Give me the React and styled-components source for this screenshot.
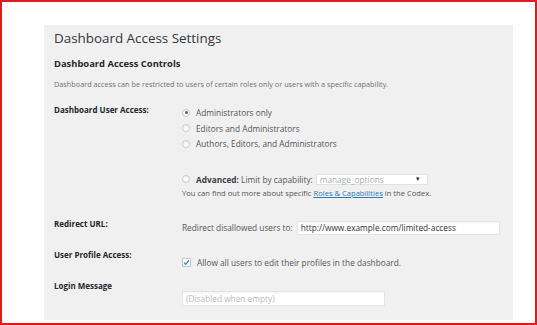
import React from 'react';
import styled, { createGlobalStyle } from 'styled-components';

const GlobalStyle = createGlobalStyle`
  body {
    margin: 0;
    font-family: "Open Sans", "Liberation Sans", sans-serif;
    background: #fff;
  }
`;

const Frame = styled.div`
  width: 537px;
  height: 325px;
  box-sizing: border-box;
  border: 2px solid #e11b1b;
  padding: 23px 0 0 42px;
  background: #fff;
`;

const Panel = styled.div`
  width: 469px;
  height: 295px;
  box-sizing: border-box;
  padding: 5px 10px 0;
  background: #f0f0f0;
  color: #555;
`;

const Title = styled.h1`
  margin: 0;
  font-size: 13.4px;
  line-height: 16px;
  font-weight: 400;
  color: #32373c;
`;

const SubTitle = styled.h2`
  margin: 12px 0 0;
  font-size: 9.4px;
  line-height: 12px;
  font-weight: 700;
  color: #23282d;
`;

const Description = styled.p`
  margin: 9px 0 0;
  font-size: 7.3px;
  line-height: 10px;
  color: #707070;
`;

const Row = styled.div`
  display: grid;
  grid-template-columns: 128px 1fr;
  margin-top: ${(p) => p.$gap}px;
`;

const Label = styled.div`
  font-size: 8px;
  line-height: 10px;
  font-weight: 700;
  color: #23282d;
`;

const Field = styled.div`
  padding-top: ${(p) => p.$offset || 0}px;
  font-size: 8.3px;
  color: #555;
`;

const Option = styled.label`
  display: flex;
  align-items: center;
  gap: 6px;
  height: ${(p) => p.$h || 15.5}px;
  margin-top: ${(p) => p.$gap || 0}px;
  white-space: nowrap;
`;

const Radio = styled.span`
  width: 8px;
  height: 8px;
  box-sizing: border-box;
  border: 1px solid #c4c8cc;
  border-radius: 50%;
  background: #fff;
  box-shadow: inset 0 1px 2px rgba(0, 0, 0, 0.08);
  display: flex;
  align-items: center;
  justify-content: center;
  flex: none;

  &::after {
    content: '';
    width: 3px;
    height: 3px;
    border-radius: 50%;
    background: ${(p) => (p.$checked ? '#4f6a80' : 'transparent')};
  }
`;

const Bold = styled.b`
  font-weight: 700;
  color: #3c4147;
`;

const Select = styled.span`
  display: inline-flex;
  align-items: center;
  justify-content: space-between;
  width: 112px;
  height: 11px;
  box-sizing: border-box;
  margin-left: -3px;
  padding: 0 6px 0 3px;
  background: #fff;
  border: 1px solid #e2e2e2;
  color: #aaa;
`;

const Arrow = styled.span`
  color: #333;
  font-size: 6px;
`;

const Help = styled.div`
  font-size: 7.6px;
  line-height: 12px;
  white-space: nowrap;
`;

const Link = styled.a`
  color: #2a7bb3;
  text-decoration: underline;
`;

const Inline = styled.div`
  display: flex;
  align-items: center;
  gap: 4px;
  white-space: nowrap;
`;

const TextInput = styled.div`
  width: ${(p) => p.$w}px;
  height: ${(p) => p.$h || 14}px;
  box-sizing: border-box;
  padding: 0 3px;
  display: flex;
  align-items: center;
  background: #fff;
  border: 1px solid #e4e4e4;
  box-shadow: inset 0 1px 1px rgba(0, 0, 0, 0.04);
  color: ${(p) => (p.$placeholder ? '#bbb' : '#333')};
  white-space: nowrap;
`;

const Checkbox = styled.span`
  width: 9px;
  height: 9px;
  box-sizing: border-box;
  border: 1px solid #c4c8cc;
  background: #fff;
  display: flex;
  align-items: center;
  justify-content: center;
  flex: none;
`;

function App() {
  return (
    <>
      <GlobalStyle />
      <Frame>
        <Panel>
          <Title>Dashboard Access Settings</Title>
          <SubTitle>Dashboard Access Controls</SubTitle>
          <Description>
            Dashboard access can be restricted to users of certain roles only or users with a specific capability.
          </Description>

          <Row $gap={16}>
            <Label>Dashboard User Access:</Label>
            <Field>
              <Option>
                <Radio $checked />
                Administrators only
              </Option>
              <Option>
                <Radio />
                Editors and Administrators
              </Option>
              <Option>
                <Radio />
                Authors, Editors, and Administrators
              </Option>
              <Option $gap={20} $h={15}>
                <Radio />
                <span>
                  <Bold>Advanced:</Bold> Limit by capability:
                </span>
                <Select>
                  manage_options
                  <Arrow>▼</Arrow>
                </Select>
              </Option>
              <Help>
                You can find out more about specific <Link>Roles &amp; Capabilities</Link> in the Codex.
              </Help>
            </Field>
          </Row>

          <Row $gap={20}>
            <Label>Redirect URL:</Label>
            <Field $offset={2}>
              <Inline>
                Redirect disallowed users to:
                <TextInput $w={203}>http://www.example.com/limited-access</TextInput>
              </Inline>
            </Field>
          </Row>

          <Row $gap={15}>
            <Label>User Profile Access:</Label>
            <Field $offset={7}>
              <Option $h={11}>
                <Checkbox>
                  <svg width="7" height="7" viewBox="0 0 10 10">
                    <path d="M1.5 5.2 L4 7.6 L8.6 1.8" fill="none" stroke="#1e8cbe" strokeWidth="1.8" />
                  </svg>
                </Checkbox>
                Allow all users to edit their profiles in the dashboard.
              </Option>
            </Field>
          </Row>

          <Row $gap={13.5}>
            <Label>Login Message</Label>
            <Field $offset={9.5}>
              <TextInput $w={203} $h={15} $placeholder>
                (Disabled when empty)
              </TextInput>
            </Field>
          </Row>
        </Panel>
      </Frame>
    </>
  );
}

export default App;
